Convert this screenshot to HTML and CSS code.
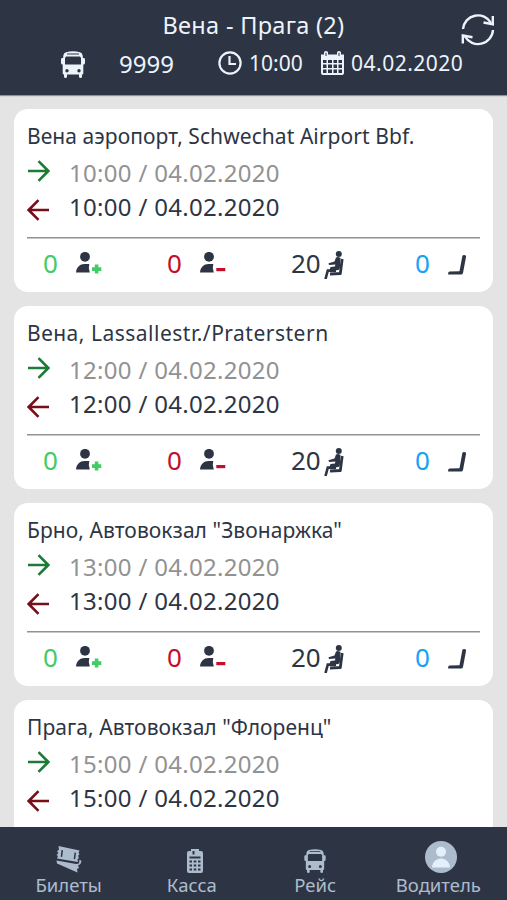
FILE: index.html
```html
<!DOCTYPE html>
<html lang="ru">
<head>
    <meta charset="UTF-8">
    <meta name="viewport" content="width=device-width, initial-scale=1.0">
    <title>Вена - Прага</title>
    <link rel="stylesheet" href="styles.css">
</head>
<body>
    <!-- shared icons -->
    <svg class="sprite">
        <symbol id="bus" viewBox="0 0 24 27">
            <path fill="currentColor" fill-rule="evenodd" d="M5 1.200Q12-.6 19 1.200Q21.500 2 21.800 5V7H23Q24 7 24 8.500V12Q24 13.500 22.300 13.500V22.500Q22.300 23.500 21 23.500V25.500Q21 27 19.500 27Q18 27 18 25.500V23.500H6V25.500Q6 27 4.500 27Q3 27 3 25.500V23.500Q1.700 23.500 1.700 22.500V13.500Q0 13.500 0 12V8.500Q0 7 1 7H2.200V5Q2.500 2 5 1.200ZM6 2.500V3.500H18V2.500ZM5 5.500L4 7V13.500H20V7L19 5.500ZM6 18A1.700 1.700 0 1 0 6 21.400A1.700 1.700 0 1 0 6 18ZM18 18A1.700 1.700 0 1 0 18 21.400A1.700 1.700 0 1 0 18 18Z"/>
        </symbol>
        <symbol id="arrow" viewBox="0 0 23 22">
            <path fill="none" stroke="currentColor" stroke-width="2.600" d="M1 11H21M11.500 1.200L21.300 11L11.500 20.800"/>
        </symbol>
        <symbol id="person" viewBox="0 0 26 22">
            <circle cx="9" cy="4.800" r="4.900" fill="#2d3545"/>
            <path fill="#2d3545" d="M0 20.500C.5 15 4 12 8.500 12H13.300Q12 16 13.800 20.500Z"/>
        </symbol>
        <symbol id="sitting" viewBox="0 0 20 28">
            <circle cx="14.800" cy="3" r="3" fill="#2d3545"/>
            <path fill="#2d3545" d="M12 6.500Q14 5.500 16.500 7L15.800 17.500Q15.300 19 13 19.300L5.500 19L6.500 16L11 15.500L11.300 13.500L5 14L4.500 12.200L10.500 10.500Z"/>
            <path fill="none" stroke="#2d3545" stroke-width="2.800" stroke-linejoin="round" d="M18.200 8L16.300 22.500L6 23"/>
            <path fill="none" stroke="#2d3545" stroke-width="2.600" d="M12 19.600H3.800L1.500 28"/>
        </symbol>
        <symbol id="seat" viewBox="0 0 19 20">
            <path fill="#2d3545" d="M0 19.500Q0 16.600 1.500 16.600L11.500 16.300L14.300 1.200Q14.600 0 16 0Q18.500 0 18 2L15 18Q14.700 19.500 13 19.500Z"/>
        </symbol>
    </svg>

    <header class="header">
        <h1 class="title">Вена - Прага (2)</h1>
        <svg class="refresh" viewBox="0 0 34 34" fill="none" stroke="currentColor" stroke-width="2.400">
            <path d="M2 16A15 15 0 0 1 30 10M32 17A15 15 0 0 1 4 23.500"/>
            <path d="M31.800 3V11.200L22.500 9.500M1.800 30.500V22.500L11.500 24.200"/>
        </svg>
        <div class="trip">
            <svg class="trip-bus"><use href="#bus"/></svg>
            <span class="trip-number">9999</span>
            <svg class="trip-clock" viewBox="0 0 24 24" fill="none" stroke="currentColor" stroke-width="2.200">
                <circle cx="12" cy="12" r="10.600"/>
                <path d="M11.500 5V13H18"/>
            </svg>
            <span class="trip-time">10:00</span>
            <svg class="trip-calendar" viewBox="0 0 23 24">
                <path fill="currentColor" fill-rule="evenodd" d="M0 3.500H3V1.500Q3 0 5 0Q7 0 7 1.500V3.500H16V1.500Q16 0 18 0Q20 0 20 1.500V3.500H23V22Q23 24 21 24H2Q0 24 0 22ZM2 9V12H5.500V9ZM7 9V12H11V9ZM12.500 9V12H16V9ZM17.500 9V12H21V9ZM2 13.500V17H5.500V13.500ZM7 13.500V17H11V13.500ZM12.500 13.500V17H16V13.500ZM17.500 13.500V17H21V13.500ZM2 18.500V22H5.500V18.500ZM7 18.500V22H11V18.500ZM12.500 18.500V22H16V18.500ZM17.500 18.500V22H21V18.500ZM4.500 1.800V5H5.500V1.800ZM17.500 1.800V5H18.500V1.800Z"/>
            </svg>
            <span class="trip-date">04.02.2020</span>
        </div>
    </header>

    <main class="stops">
        <section class="stop">
            <h2>Вена аэропорт, Schwechat Airport Bbf.</h2>
            <div class="time arrival"><svg><use href="#arrow"/></svg><span>10:00 / 04.02.2020</span></div>
            <div class="time departure"><svg><use href="#arrow"/></svg><span>10:00 / 04.02.2020</span></div>
            <div class="counters">
                <div class="counter green"><span>0</span><svg class="person" viewBox="0 0 26 22"><use href="#person"/><path fill="currentColor" d="M18.800 12.500H22.400V15.300H25.300V18.900H22.400V21.600H18.800V18.900H16V15.300H18.800Z"/></svg></div>
                <div class="counter red"><span>0</span><svg class="person" viewBox="0 0 26 22"><use href="#person"/><path fill="currentColor" d="M16.300 16H25.300V19.200H16.300Z"/></svg></div>
                <div class="counter"><span>20</span><svg class="sitting"><use href="#sitting"/></svg></div>
                <div class="counter blue"><span>0</span><svg class="seat"><use href="#seat"/></svg></div>
            </div>
        </section>
        <section class="stop">
            <h2 class="wide">Вена, Lassallestr./Praterstern</h2>
            <div class="time arrival"><svg><use href="#arrow"/></svg><span>12:00 / 04.02.2020</span></div>
            <div class="time departure"><svg><use href="#arrow"/></svg><span>12:00 / 04.02.2020</span></div>
            <div class="counters">
                <div class="counter green"><span>0</span><svg class="person" viewBox="0 0 26 22"><use href="#person"/><path fill="currentColor" d="M18.800 12.500H22.400V15.300H25.300V18.900H22.400V21.600H18.800V18.900H16V15.300H18.800Z"/></svg></div>
                <div class="counter red"><span>0</span><svg class="person" viewBox="0 0 26 22"><use href="#person"/><path fill="currentColor" d="M16.300 16H25.300V19.200H16.300Z"/></svg></div>
                <div class="counter"><span>20</span><svg class="sitting"><use href="#sitting"/></svg></div>
                <div class="counter blue"><span>0</span><svg class="seat"><use href="#seat"/></svg></div>
            </div>
        </section>
        <section class="stop">
            <h2>Брно, Автовокзал "Звонаржка"</h2>
            <div class="time arrival"><svg><use href="#arrow"/></svg><span>13:00 / 04.02.2020</span></div>
            <div class="time departure"><svg><use href="#arrow"/></svg><span>13:00 / 04.02.2020</span></div>
            <div class="counters">
                <div class="counter green"><span>0</span><svg class="person" viewBox="0 0 26 22"><use href="#person"/><path fill="currentColor" d="M18.800 12.500H22.400V15.300H25.300V18.900H22.400V21.600H18.800V18.900H16V15.300H18.800Z"/></svg></div>
                <div class="counter red"><span>0</span><svg class="person" viewBox="0 0 26 22"><use href="#person"/><path fill="currentColor" d="M16.300 16H25.300V19.200H16.300Z"/></svg></div>
                <div class="counter"><span>20</span><svg class="sitting"><use href="#sitting"/></svg></div>
                <div class="counter blue"><span>0</span><svg class="seat"><use href="#seat"/></svg></div>
            </div>
        </section>
        <section class="stop">
            <h2>Прага, Автовокзал "Флоренц"</h2>
            <div class="time arrival"><svg><use href="#arrow"/></svg><span>15:00 / 04.02.2020</span></div>
            <div class="time departure"><svg><use href="#arrow"/></svg><span>15:00 / 04.02.2020</span></div>
        </section>
    </main>

    <nav class="tabs">
        <a class="tab">
            <svg class="tab-tickets" viewBox="0 0 26 27">
                <path fill="currentColor" fill-rule="evenodd" d="M2.500 0L23.500 4.500L22.500 7L23.500 8L22 10L23 11.500L21.500 13.500L22 16L1 12.500L2 10L.5 9L2.500 7L1 5.500L3 3.500ZM5.500 4L4.700 10.700L6.200 11L7 4.300ZM18.500 6.500L17.700 13L19.200 13.300L20 6.800Z"/>
                <path fill="currentColor" d="M.5 14.500L20 18L23 17.500L23.500 13.500L25.500 15L24.500 18L22 19.500L23 22L21 23L21.500 26.500L1 17.500Z"/>
            </svg>
            <span>Билеты</span>
        </a>
        <a class="tab">
            <svg class="tab-cash" viewBox="0 0 16 24">
                <path fill="currentColor" fill-rule="evenodd" d="M4 0H12V2H14Q16 2 16 4V22Q16 24 14 24H2Q0 24 0 22V4Q0 2 2 2H4ZM5.500 2V5.500H7.500V2ZM2.500 7.500V9.500H13.500V7.500ZM2.500 11.500V13.500H5V11.500ZM6.700 11.500V13.500H9.300V11.500ZM11 11.500V13.500H13.500V11.500ZM2.500 15.500V17.500H5V15.500ZM6.700 15.500V17.500H9.300V15.500ZM11 15.500V17.500H13.500V15.500ZM2.500 19.500V21.500H5V19.500ZM6.700 19.500V21.500H9.300V19.500ZM11 19.500V21.500H13.500V19.500Z"/>
            </svg>
            <span>Касса</span>
        </a>
        <a class="tab">
            <svg class="tab-bus"><use href="#bus"/></svg>
            <span>Рейс</span>
        </a>
        <a class="tab">
            <svg class="tab-driver" viewBox="0 0 32 32">
                <circle cx="16" cy="16" r="16" fill="#adbccd"/>
                <circle cx="16" cy="10.800" r="5" fill="#e4effc"/>
                <path fill="#e4effc" d="M7 26.500C7.500 21 11 17.500 16 17.500S24.500 21 25 26.500Z"/>
            </svg>
            <span>Водитель</span>
        </a>
    </nav>
</body>
</html>
```
FILE: styles.css
```css
* {
    box-sizing: border-box;
}
body {
    display: flex;
    flex-direction: column;
    height: 900px;
    margin: 0;
    overflow: hidden;
    font-family: "Noto Sans", sans-serif;
    color: #2d3545;
    background-color: #e4e4e4;
}
h1, h2 {
    margin: 0;
    font-weight: normal;
}
svg {
    display: block;
}
.sprite {
    display: none;
}

/* header */
.header {
    display: grid;
    grid-template-columns: 46px 1fr 46px;
    grid-template-rows: 46px 36px;
    flex: none;
    height: 95px;
    color: #edf3fb;
    background-color: #2d3545;
    box-shadow: 0 1px 1px #8e929b;
}
.title {
    grid-column: 2;
    padding-top: 8px;
    font-size: 23.500px;
    line-height: 34px;
    letter-spacing: 0.3px;
    text-align: center;
}
.refresh {
    width: 34px;
    height: 34px;
    margin-top: 13px;
}
.trip {
    display: grid;
    grid-template-columns: 58px 99px 31px 72px 30px auto;
    grid-column: 1 / 4;
    align-items: center;
    padding-left: 61px;
    font-size: 21px;
}
.trip span {
    padding-bottom: 2px;
}
.trip-bus {
    width: 24px;
    height: 27px;
}
.trip-number {
    font-size: 24px;
}
.trip-clock {
    width: 24px;
    height: 24px;
    margin-bottom: 2px;
}
.trip-calendar {
    width: 23px;
    height: 24px;
    margin-bottom: 2px;
}
.trip-date {
    letter-spacing: 0.5px;
}

/* stop cards */
.stops {
    display: flex;
    flex: 1;
    flex-direction: column;
    gap: 14px;
    min-height: 0;
    padding: 14px 14px 0;
    overflow: hidden;
}
.stop {
    flex: none;
    height: 183px;
    padding: 13px 13px 0;
    border-radius: 14px;
    background-color: #fff;
}
.stop h2 {
    font-size: 21px;
    line-height: 28px;
    letter-spacing: 0.07px;
    white-space: nowrap;
}
.stop h2.wide {
    letter-spacing: 0.5px;
}
.time {
    display: flex;
    align-items: center;
    height: 34px;
    font-size: 24px;
    letter-spacing: 0.3px;
}
.time:nth-child(2) {
    margin-top: 7px;
}
.time span {
    padding-bottom: 4px;
}
.time svg {
    width: 23px;
    height: 22px;
    margin-right: 19px;
}
.arrival {
    color: #929292;
}
.arrival svg {
    margin-bottom: 6px;
    color: #1c7c35;
}
.departure svg {
    margin-top: 4px;
    color: #780f18;
    transform: scaleX(-1);
}
.counters {
    display: grid;
    grid-template-columns: repeat(4, 124px);
    height: 53px;
    margin-top: 11px;
    padding-left: 16px;
    background: linear-gradient(#929292, #929292) 0 1px / 453px 1.500px no-repeat;
}
.counter {
    display: flex;
    align-items: center;
    font-size: 26px;
}
.counter span {
    width: 33px;
}
.green {
    color: #43cb67;
}
.red {
    color: #c40e2b;
}
.blue {
    color: #18a2f4;
}
.person {
    width: 26px;
    height: 22px;
}
.sitting {
    width: 20px;
    height: 28px;
    margin-top: 4px;
}
.seat {
    width: 19px;
    height: 20px;
    margin-top: 4px;
}

/* bottom tabs */
.tabs {
    display: grid;
    grid-template-columns: repeat(4, 1fr);
    flex: none;
    height: 73px;
    padding: 0 7px;
    color: #adbccd;
    background-color: #2d3545;
}
.tab {
    display: flex;
    flex-direction: column;
    align-items: center;
    justify-content: flex-end;
    font-size: 18.500px;
}
.tab span {
    margin-top: -1px;
    padding-bottom: 2px;
    line-height: 26px;
}
.tab-tickets {
    width: 26px;
    height: 27px;
}
.tab-cash {
    width: 16px;
    height: 24px;
    margin-left: 6px;
}
.tab-bus {
    width: 22px;
    height: 24px;
}
.tab-driver {
    width: 32px;
    height: 32px;
    margin-left: 6px;
}
```
